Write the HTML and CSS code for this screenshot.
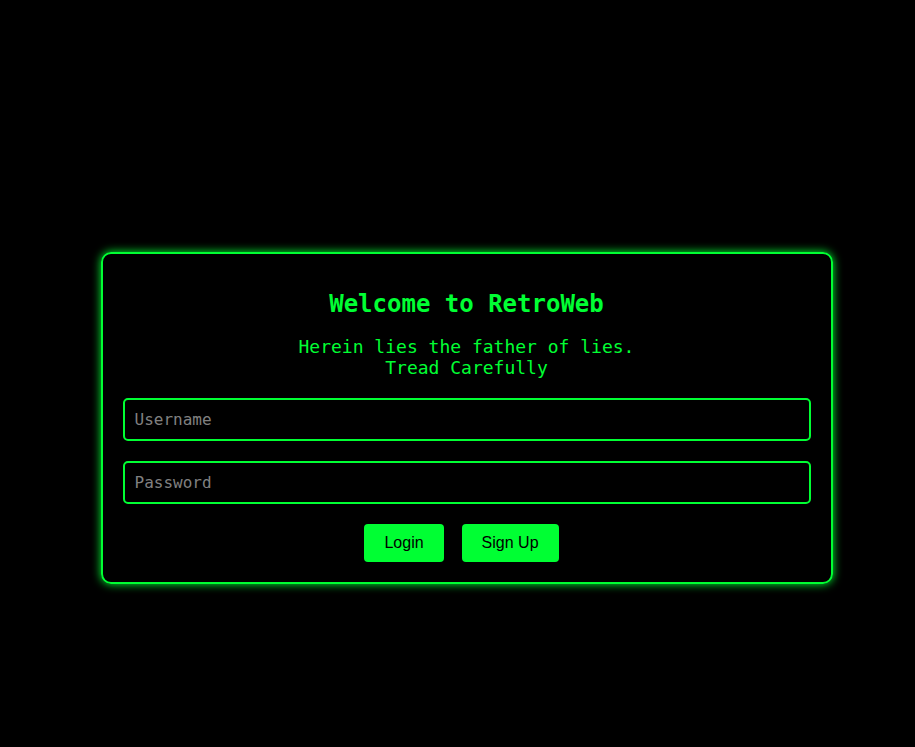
FILE: index.html
```html
<!DOCTYPE html>
<html lang="en">
<head>
<meta charset="utf-8">
<title>RetroWeb</title>
<link rel="stylesheet" href="styles.css">
</head>
<body>
<main class="page">
  <form class="card">
    <h1 class="title">Welcome to RetroWeb</h1>
    <p class="subtitle">Herein lies the father of lies.<br>Tread Carefully</p>
    <input class="field" type="text" placeholder="Username">
    <input class="field" type="password" placeholder="Password">
    <div class="actions">
      <button class="btn" type="button">Login</button>
      <button class="btn" type="button">Sign Up</button>
    </div>
  </form>
</main>
</body>
</html>
```
FILE: styles.css
```css
html, body {
  margin: 0;
  padding: 0;
  background: #000;
}
body {
  font-family: "DejaVu Sans Mono", monospace;
  color: #00ff33;
  min-height: 747px;
}
.page {
  display: flex;
  justify-content: center;
  padding: 252px 0 0 18px;
}
.card {
  box-sizing: border-box;
  width: 732px;
  border: 2px solid #00ff33;
  border-radius: 10px;
  box-shadow: 0 0 10px #00ff33;
  padding: 20px;
  display: flex;
  flex-direction: column;
  align-items: stretch;
  text-align: center;
}
.title {
  margin: 16px 0 18px;
  font-size: 24px;
  line-height: 28px;
  font-weight: bold;
}
.subtitle {
  margin: 0 0 20px;
  font-size: 18px;
  line-height: 21px;
}
.field {
  box-sizing: border-box;
  height: 43px;
  margin: 0 0 20px;
  padding: 0 10px;
  background: #000;
  border: 2px solid #00ff33;
  border-radius: 5px;
  color: #00ff33;
  font-family: "DejaVu Sans Mono", monospace;
  font-size: 16px;
  outline: none;
}
.field::placeholder {
  color: #808080;
}
.actions {
  display: flex;
  justify-content: center;
  gap: 18px;
  padding-right: 10px;
}
.btn {
  height: 38px;
  padding: 0 20px;
  background: #00ff33;
  color: #000;
  border: none;
  border-radius: 4px;
  font-family: "Liberation Sans", Arial, sans-serif;
  font-size: 16px;
  cursor: pointer;
}
```
